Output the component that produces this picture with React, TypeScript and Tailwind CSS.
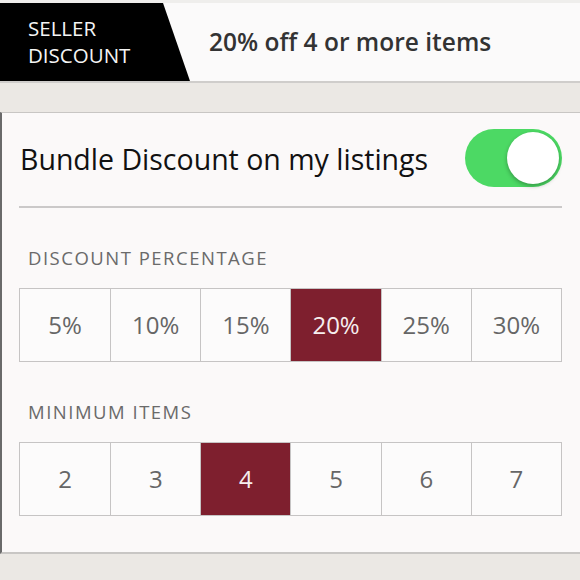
import React from "react";

const pct = ["5%", "10%", "15%", "20%", "25%", "30%"];
const items = ["2", "3", "4", "5", "6", "7"];

function Segmented({ options, selected }: { options: string[]; selected: string }) {
  return (
    <div className="grid grid-cols-6 h-[74px] shrink-0 border border-[#c6c4c4] bg-[#fcfbfb]">
      {options.map((o, i) => (
        <div
          key={o}
          className={
            "flex items-center justify-center text-[24px] " +
            (i > 0 ? "border-l border-[#c6c4c4] " : "") +
            (o === selected ? "bg-[#7e1f2e] text-[#f6eeef]" : "text-[#666666]")
          }
        >
          {o}
        </div>
      ))}
    </div>
  );
}

export default function App() {
  return (
    <div
      className="w-[580px] h-[580px] overflow-hidden flex flex-col bg-[#ebe8e4]"
      style={{ fontFamily: "'Open Sans', Lato, sans-serif" }}
    >
      <div className="h-[3px] shrink-0 bg-[#efeeec]" />
      <div className="h-[80px] shrink-0 flex items-center bg-[#fbfafa] border-b-2 border-[#cfcdcb]">
        <div className="h-full w-[190px] shrink-0 bg-black [clip-path:polygon(0_0,163px_0,190px_100%,0_100%)] flex flex-col justify-center pl-[28px] text-[#f4f4f4] text-[20.5px] leading-[27px]">
          <span>SELLER</span>
          <span>DISCOUNT</span>
        </div>
        <div className="pl-[19px] text-[24.5px] font-semibold text-[#333333]">20% off 4 or more items</div>
      </div>
      <div className="h-[29px] shrink-0" />
      <div className="h-[442px] shrink-0 bg-[#fbf9f9] border-t border-b-2 border-[#c8c6c4] border-l-2 border-l-[#6a6a6a] flex flex-col pl-[17px] pr-[18px]">
        <div className="h-[95px] shrink-0 flex items-center justify-between border-b-2 border-[#cbc9c9] pl-[1px]">
          <span className="text-[28.5px] text-[#111111]">Bundle Discount on my listings</span>
          <div className="w-[97px] h-[58px] rounded-full bg-[#4cd964] flex items-center justify-end pr-[3px] mb-[4px]">
            <div className="w-[52px] h-[52px] rounded-full bg-white shadow-[0_2px_4px_rgba(0,0,0,0.3)]" />
          </div>
        </div>
        <div className="pt-[38px] pb-[18px] pl-[9px] text-[18.5px] leading-[24px] tracking-[1.5px] text-[#6a6a6a]">DISCOUNT PERCENTAGE</div>
        <Segmented options={pct} selected="20%" />
        <div className="pt-[38px] pb-[18px] pl-[9px] text-[18.5px] leading-[24px] tracking-[1.5px] text-[#6a6a6a]">MINIMUM ITEMS</div>
        <Segmented options={items} selected="4" />
      </div>
    </div>
  );
}
